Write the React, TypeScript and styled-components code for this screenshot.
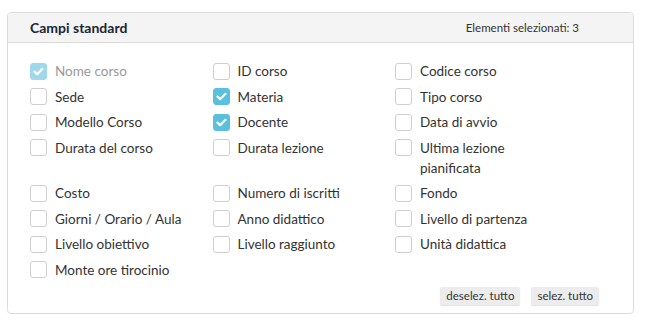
import React, { useState } from 'react'
import styled, { createGlobalStyle } from 'styled-components'

const GlobalStyle = createGlobalStyle`
  html, body {
    margin: 0;
    padding: 0;
    background: #fff;
  }
  body {
    font-family: Lato, 'Liberation Sans', sans-serif;
    color: #333;
  }
`

const Page = styled.div`
  padding: 12px 15px 0 7px;
`

const Panel = styled.div`
  width: 627px;
  box-sizing: border-box;
  border: 1px solid #dcdcdc;
  border-radius: 4px;
  background: #fff;
  overflow: hidden;
`

const Header = styled.div`
  display: flex;
  align-items: center;
  justify-content: space-between;
  height: 29px;
  padding: 0 54px 0 22px;
  background: #f4f4f4;
  border-bottom: 1px solid #dcdcdc;
`

const Title = styled.h3`
  margin: 0;
  font-size: 14px;
  font-weight: 700;
  color: #1d2533;
`

const Counter = styled.span`
  font-size: 11.5px;
  color: #333;
`

const Body = styled.div`
  padding: 18px 34px 8px 22px;
`

const Grid = styled.div`
  display: grid;
  grid-template-columns: repeat(3, 182.5px);
  row-gap: 5.5px;
`

const Item = styled.label<{ $disabled?: boolean }>`
  display: flex;
  align-items: flex-start;
  gap: 8px;
  font-size: 13.5px;
  line-height: 20px;
  color: ${p => (p.$disabled ? '#999' : '#333')};
  cursor: ${p => (p.$disabled ? 'default' : 'pointer')};
  user-select: none;
`

const Text = styled.span`
  max-width: 140px;
`

const Box = styled.span<{ $checked: boolean; $disabled?: boolean }>`
  flex: none;
  display: flex;
  align-items: center;
  justify-content: center;
  width: 17px;
  height: 17px;
  margin-top: 1.5px;
  box-sizing: border-box;
  border-radius: 3px;
  border: 1px solid
    ${p => (p.$checked ? (p.$disabled ? '#9fd8ea' : '#5bc0de') : '#cfcfcf')};
  background: ${p =>
    p.$checked ? (p.$disabled ? '#9fd8ea' : '#5bc0de') : '#fff'};
`

const Footer = styled.div`
  display: flex;
  justify-content: flex-end;
  gap: 11px;
  margin-top: 7px;
`

const SmallButton = styled.button`
  height: 18px;
  padding: 0 6px;
  border: 0;
  border-radius: 2px;
  background: #ececec;
  box-shadow: 0 1px 1px rgba(0, 0, 0, 0.12);
  font-family: Lato, 'Liberation Sans', sans-serif;
  font-size: 11.5px;
  color: #333;
  line-height: 18px;
  cursor: pointer;
`

type Field = { id: string; label: string; locked?: boolean }

const fields: Field[] = [
  { id: 'nome', label: 'Nome corso', locked: true },
  { id: 'id', label: 'ID corso' },
  { id: 'codice', label: 'Codice corso' },
  { id: 'sede', label: 'Sede' },
  { id: 'materia', label: 'Materia' },
  { id: 'tipo', label: 'Tipo corso' },
  { id: 'modello', label: 'Modello Corso' },
  { id: 'docente', label: 'Docente' },
  { id: 'avvio', label: 'Data di avvio' },
  { id: 'durata', label: 'Durata del corso' },
  { id: 'durataLezione', label: 'Durata lezione' },
  { id: 'ultima', label: 'Ultima lezione pianificata' },
  { id: 'costo', label: 'Costo' },
  { id: 'iscritti', label: 'Numero di iscritti' },
  { id: 'fondo', label: 'Fondo' },
  { id: 'giorni', label: 'Giorni / Orario / Aula' },
  { id: 'anno', label: 'Anno didattico' },
  { id: 'partenza', label: 'Livello di partenza' },
  { id: 'obiettivo', label: 'Livello obiettivo' },
  { id: 'raggiunto', label: 'Livello raggiunto' },
  { id: 'unita', label: 'Unità didattica' },
  { id: 'tirocinio', label: 'Monte ore tirocinio' },
]

const Check = () => (
  <svg width="11" height="9" viewBox="0 0 11 9">
    <path
      d="M1.5 4.6 L4.2 7.2 L9.5 1.8"
      fill="none"
      stroke="#fff"
      strokeWidth="2.2"
      strokeLinecap="round"
      strokeLinejoin="round"
    />
  </svg>
)

const App = () => {
  const [selected, setSelected] = useState<string[]>(['nome', 'materia', 'docente'])

  const toggle = (f: Field) => {
    if (f.locked) return
    setSelected(s => (s.includes(f.id) ? s.filter(x => x !== f.id) : [...s, f.id]))
  }

  return (
    <Page>
      <GlobalStyle />
      <Panel>
        <Header>
          <Title>Campi standard</Title>
          <Counter>Elementi selezionati: {selected.length}</Counter>
        </Header>
        <Body>
          <Grid>
            {fields.map(f => {
              const on = selected.includes(f.id)
              return (
                <Item key={f.id} $disabled={f.locked} onClick={() => toggle(f)}>
                  <Box $checked={on} $disabled={f.locked}>
                    {on && <Check />}
                  </Box>
                  <Text>{f.label}</Text>
                </Item>
              )
            })}
          </Grid>
          <Footer>
            <SmallButton onClick={() => setSelected(['nome'])}>deselez. tutto</SmallButton>
            <SmallButton onClick={() => setSelected(fields.map(f => f.id))}>
              selez. tutto
            </SmallButton>
          </Footer>
        </Body>
      </Panel>
    </Page>
  )
}

export default App
